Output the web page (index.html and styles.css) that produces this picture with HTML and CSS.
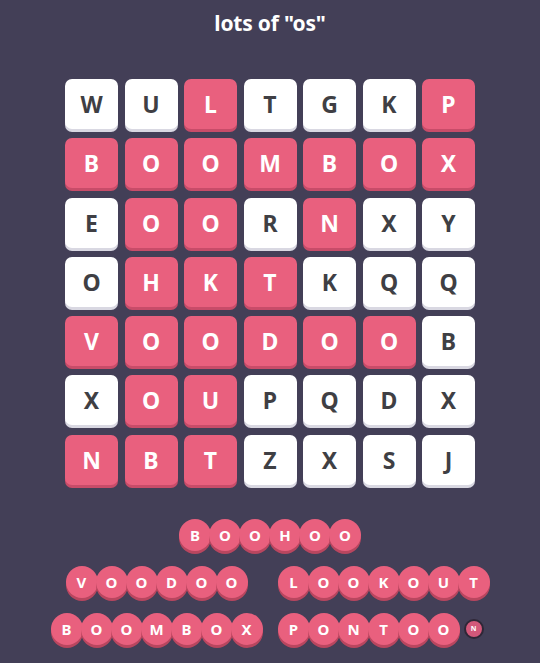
FILE: index.html
```html
<!DOCTYPE html>
<html lang="en">
<head>
  <meta charset="UTF-8">
  <title>lots of "os"</title>
  <meta name="viewport" content="width=device-width, initial-scale=1.0">
  <link rel="stylesheet" href="styles.css">
</head>
<body>
  <div class="page">
    <!-- puzzle title -->
    <h1 class="title">lots of "os"</h1>

    <!-- letter board -->
    <div class="board">
      <div class="tile">W</div><div class="tile">U</div><div class="tile on">L</div><div class="tile">T</div><div class="tile">G</div><div class="tile">K</div><div class="tile on">P</div>
      <div class="tile on">B</div><div class="tile on">O</div><div class="tile on">O</div><div class="tile on">M</div><div class="tile on">B</div><div class="tile on">O</div><div class="tile on">X</div>
      <div class="tile">E</div><div class="tile on">O</div><div class="tile on">O</div><div class="tile">R</div><div class="tile on">N</div><div class="tile">X</div><div class="tile">Y</div>
      <div class="tile">O</div><div class="tile on">H</div><div class="tile on">K</div><div class="tile on">T</div><div class="tile">K</div><div class="tile">Q</div><div class="tile">Q</div>
      <div class="tile on">V</div><div class="tile on">O</div><div class="tile on">O</div><div class="tile on">D</div><div class="tile on">O</div><div class="tile on">O</div><div class="tile">B</div>
      <div class="tile">X</div><div class="tile on">O</div><div class="tile on">U</div><div class="tile">P</div><div class="tile">Q</div><div class="tile">D</div><div class="tile">X</div>
      <div class="tile on">N</div><div class="tile on">B</div><div class="tile on">T</div><div class="tile">Z</div><div class="tile">X</div><div class="tile">S</div><div class="tile">J</div>
    </div>

    <!-- found words -->
    <div class="words">
      <div class="word-row">
        <div class="word">
          <span class="bead">B</span><span class="bead">O</span><span class="bead">O</span><span class="bead">H</span><span class="bead">O</span><span class="bead">O</span>
        </div>
      </div>
      <div class="word-row">
        <div class="word">
          <span class="bead">V</span><span class="bead">O</span><span class="bead">O</span><span class="bead">D</span><span class="bead">O</span><span class="bead">O</span>
        </div>
        <div class="word">
          <span class="bead">L</span><span class="bead">O</span><span class="bead">O</span><span class="bead">K</span><span class="bead">O</span><span class="bead">U</span><span class="bead">T</span>
        </div>
      </div>
      <div class="word-row">
        <div class="word">
          <span class="bead">B</span><span class="bead">O</span><span class="bead">O</span><span class="bead">M</span><span class="bead">B</span><span class="bead">O</span><span class="bead">X</span>
        </div>
        <div class="word">
          <span class="bead">P</span><span class="bead">O</span><span class="bead">N</span><span class="bead">T</span><span class="bead">O</span><span class="bead">O</span><span class="bead slot"><span class="mini">N</span></span>
        </div>
      </div>
    </div>
  </div>
</body>
</html>
```

FILE: styles.css
```css
body {
  margin: 0;
  background: #433f57;
  font-family: "Noto Sans", "Open Sans", sans-serif;
  color: #fff;
}
.page {
  width: 540px;
  height: 663px;
  overflow: hidden;
  display: flex;
  flex-direction: column;
  align-items: center;
}
.title {
  margin: 8px 0 0;
  font-size: 21px;
  line-height: 30px;
  font-weight: 700;
  letter-spacing: -0.2px;
}

/* board */
.board {
  margin-top: 41px;
  display: grid;
  grid-template-columns: repeat(7, 53px);
  grid-auto-rows: 50px;
  column-gap: 6.5px;
  row-gap: 9.3px;
}
.tile {
  display: flex;
  align-items: center;
  justify-content: center;
  background: #fff;
  border-radius: 7px;
  box-shadow: 0 3px 0 #d9d8e2;
  color: #3f3f44;
  font-size: 23px;
  font-weight: 700;
}
.tile.on {
  background: #e9607e;
  box-shadow: 0 3px 0 #c84c69;
  color: #fff;
}

/* words */
.words {
  margin-top: 34px;
  display: flex;
  flex-direction: column;
  gap: 15px;
}
.word-row {
  display: flex;
  justify-content: center;
}
.word {
  width: 227px;
  display: flex;
  justify-content: center;
  align-items: center;
}
.bead {
  width: 32px;
  height: 32px;
  border-radius: 50%;
  background: #e9607e;
  box-shadow: 0 3px 0 #b9465f;
  display: flex;
  align-items: center;
  justify-content: center;
  font-size: 15px;
  font-weight: 700;
  flex-shrink: 0;
}
.bead + .bead {
  margin-left: -2px;
}
.bead.slot {
  background: none;
  box-shadow: none;
}
.mini {
  width: 16px;
  height: 16px;
  border-radius: 50%;
  background: #d3587a;
  border: 2px solid #2f2737;
  display: flex;
  align-items: center;
  justify-content: center;
  font-size: 7px;
  font-weight: 700;
}
```
